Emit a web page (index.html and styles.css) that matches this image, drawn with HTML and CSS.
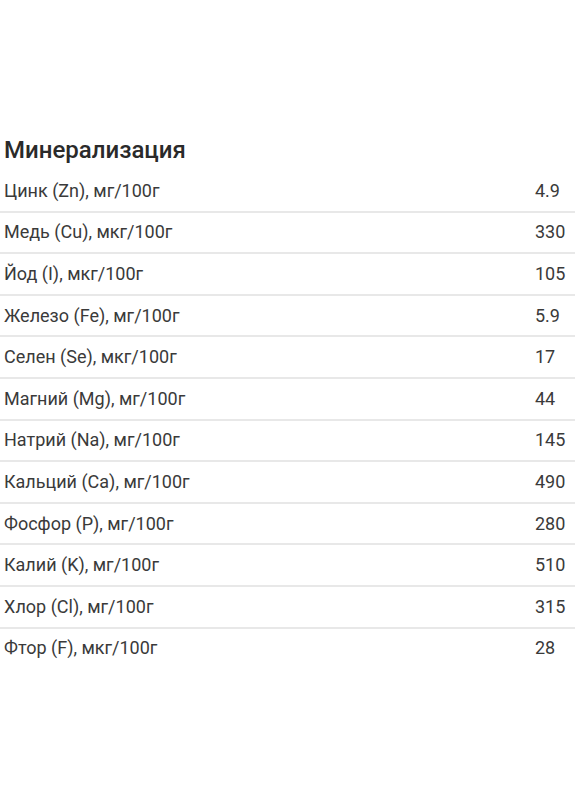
FILE: index.html
```html
<!DOCTYPE html>
<html lang="ru">
<head>
<meta charset="utf-8">
<link rel="stylesheet" href="styles.css">
</head>
<body>
<section class="minerals">
  <h2 class="title">Минерализация</h2>
  <div class="table">
    <div class="row"><span class="name">Цинк (Zn), мг/100г</span><span class="val">4.9</span></div>
    <div class="row"><span class="name">Медь (Cu), мкг/100г</span><span class="val">330</span></div>
    <div class="row"><span class="name">Йод (I), мкг/100г</span><span class="val">105</span></div>
    <div class="row"><span class="name">Железо (Fe), мг/100г</span><span class="val">5.9</span></div>
    <div class="row"><span class="name">Селен (Se), мкг/100г</span><span class="val">17</span></div>
    <div class="row"><span class="name">Магний (Mg), мг/100г</span><span class="val">44</span></div>
    <div class="row"><span class="name">Натрий (Na), мг/100г</span><span class="val">145</span></div>
    <div class="row"><span class="name">Кальций (Ca), мг/100г</span><span class="val">490</span></div>
    <div class="row"><span class="name">Фосфор (P), мг/100г</span><span class="val">280</span></div>
    <div class="row"><span class="name">Калий (K), мг/100г</span><span class="val">510</span></div>
    <div class="row"><span class="name">Хлор (Cl), мг/100г</span><span class="val">315</span></div>
    <div class="row"><span class="name">Фтор (F), мкг/100г</span><span class="val">28</span></div>
  </div>
</section>
</body>
</html>
```
FILE: styles.css
```css
html, body {
  margin: 0;
  padding: 0;
  background: #ffffff;
}
body {
  font-family: Roboto, "Liberation Sans", sans-serif;
  color: #3a3a3a;
}
.minerals {
  padding-top: 133px;
}
.title {
  margin: 0 0 4px 4px;
  font-size: 24px;
  font-weight: 500;
  line-height: 34px;
  color: #2a2a2a;
}
.table {
  display: flex;
  flex-direction: column;
}
.row {
  display: grid;
  grid-template-columns: 1fr 40px;
  align-items: center;
  height: 39.6px;
  padding-left: 4px;
  font-size: 18px;
  line-height: 22px;
  border-bottom: 2px solid #e8e8e8;
}
.row:last-child {
  border-bottom: none;
}
.val {
  text-align: left;
}
```
